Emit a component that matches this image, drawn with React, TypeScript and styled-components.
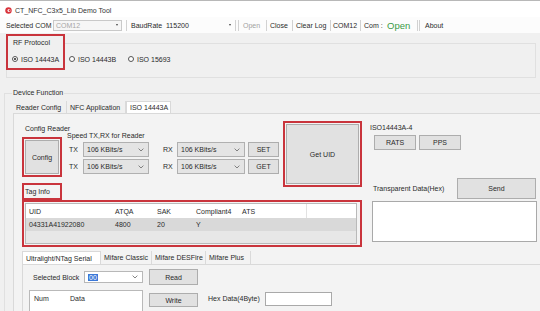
import React, { FunctionComponent } from 'react'
import styled, { createGlobalStyle, css } from 'styled-components'

const GlobalStyle = createGlobalStyle`
  html, body {
    margin: 0;
    padding: 0;
    background: #f0f0f0;
    overflow: hidden;
  }
  body {
    font-family: "Liberation Sans", Arial, sans-serif;
    font-size: 7px;
    color: #2a2a2a;
  }
`

const Window = styled.div`
  width: 540px;
  height: 311px;
  box-sizing: border-box;
  overflow: hidden;
  display: flex;
  flex-direction: column;
  border-top: 1px solid #b8b8b8;
`
const TitleBar = styled.div`
  height: 16px;
  flex: none;
  padding: 2px 0 0 5px;
  box-sizing: border-box;
  background: #fff;
  display: flex;
  align-items: center;
  gap: 3px;
  color: #333;
  white-space: nowrap;
`
const Toolbar = styled.div`
  height: 16px;
  flex: none;
  padding-left: 6px;
  background: #fcfcfc;
  display: flex;
  align-items: center;
  white-space: nowrap;
`
const ToolText = styled.span<{ $w: number; $muted?: boolean; $green?: boolean }>`
  width: ${(p) => p.$w}px;
  flex: none;
  color: ${(p) => (p.$muted ? '#a2a2a2' : '#2a2a2a')};
  ${(p) =>
    p.$green &&
    css`
      color: #3a9b46;
      font-size: 9.5px;
    `}
`
const ToolSep = styled.span<{ $ml: number; $mr: number }>`
  width: 1px;
  height: 11px;
  flex: none;
  background: #d2d2d2;
  margin: 0 ${(p) => p.$mr}px 0 ${(p) => p.$ml}px;
`
const ToolCombo = styled.div<{ $w: number; $boxed?: boolean }>`
  width: ${(p) => p.$w}px;
  height: 11px;
  flex: none;
  box-sizing: border-box;
  display: flex;
  align-items: center;
  justify-content: space-between;
  padding: 0 3px 0 2px;
  ${(p) =>
    p.$boxed &&
    css`
      border: 1px solid #c9c9c9;
      background: #f6f6f6;
      color: #a6a6a6;
    `}
`
const SmallArrow = styled.span`
  width: 0;
  height: 0;
  border-left: 1.5px solid transparent;
  border-right: 1.5px solid transparent;
  border-top: 2px solid #444;
`

const RfFrame = styled.div`
  flex: none;
  margin: 10px 4px 0 6px;
  height: 35px;
  box-sizing: border-box;
  border: 1px solid #e0e0e0;
`
const RfRow = styled.div`
  display: flex;
  align-items: flex-end;
  margin: -10px 0 0 -1px;
`
const RedBox = styled.div<{ $w: number; $h: number; $pad?: string }>`
  width: ${(p) => p.$w}px;
  height: ${(p) => p.$h}px;
  flex: none;
  box-sizing: border-box;
  border: 2px solid #c9343c;
  padding: ${(p) => p.$pad ?? '0'};
  display: flex;
  flex-direction: column;
`
const RfCaption = styled.div`
  height: 14px;
  line-height: 14px;
  padding-left: 5px;
  background: #f0f0f0;
`
const RadioItem = styled.label<{ $w?: number; $ml?: number; $mb?: number }>`
  height: 18px;
  ${(p) => p.$w !== undefined && `width: ${p.$w}px;`}
  margin-left: ${(p) => p.$ml ?? 0}px;
  margin-bottom: ${(p) => p.$mb ?? 0}px;
  flex: none;
  display: flex;
  align-items: center;
  gap: 3px;
  white-space: nowrap;
`
const RadioCircle = styled.span<{ $on?: boolean }>`
  width: 6px;
  height: 6px;
  box-sizing: border-box;
  border-radius: 50%;
  border: 1px solid #555;
  background: #fff;
  display: flex;
  align-items: center;
  justify-content: center;
  &::after {
    content: '';
    width: 2px;
    height: 2px;
    border-radius: 50%;
    background: ${(p) => (p.$on ? '#222' : 'transparent')};
  }
`

const DevFrame = styled.div`
  margin: 15px 0 0 4px;
  flex: 1;
  min-height: 0;
  display: flex;
  flex-direction: column;
  border-top: 1px solid #e0e0e0;
  border-left: 1px solid #e0e0e0;
`
const DevCaption = styled.div`
  align-self: flex-start;
  margin: -5px 0 0 7px;
  padding: 0 1px;
  height: 8px;
  line-height: 8px;
  background: #f0f0f0;
`
const TabStrip = styled.div<{ $h: number; $mt: number; $ml: number }>`
  flex: none;
  display: flex;
  align-items: flex-end;
  height: ${(p) => p.$h}px;
  margin: ${(p) => p.$mt}px 0 0 ${(p) => p.$ml}px;
  white-space: nowrap;
`
const Tab = styled.div<{ $w: number; $active?: boolean }>`
  width: ${(p) => p.$w}px;
  height: 100%;
  box-sizing: border-box;
  padding-left: 3px;
  display: flex;
  align-items: center;
  border-right: 1px solid #dadada;
  ${(p) =>
    p.$active &&
    css`
      background: #fff;
      border: 1px solid #d9d9d9;
      border-bottom: none;
    `}
`
const TabPage = styled.div`
  flex: none;
  margin-left: 8px;
  padding: 7px 0 0 8px;
  border-top: 1px solid #d9d9d9;
  border-left: 1px solid #d9d9d9;
  background: #f3f3f3;
`
const MainRow = styled.div`
  display: flex;
  align-items: flex-start;
`
const LeftCol = styled.div`
  width: 340px;
  display: flex;
  flex-direction: column;
`
const TopRow = styled.div`
  height: 62px;
  display: flex;
  align-items: flex-start;
`
const ConfigReader = styled.div`
  width: 258px;
  display: flex;
  flex-direction: column;
`
const Caption = styled.div<{ $h: number; $pl?: number }>`
  height: ${(p) => p.$h}px;
  line-height: ${(p) => p.$h}px;
  padding-left: ${(p) => p.$pl ?? 0}px;
  white-space: nowrap;
`
const ConfigBody = styled.div`
  display: flex;
  align-items: flex-start;
`
const SpeedGroup = styled.div`
  margin: -5px 0 0 5px;
  display: flex;
  flex-direction: column;
  gap: 2px;
`
const SpeedRow = styled.div`
  height: 15px;
  display: flex;
  align-items: center;
`
const FieldLabel = styled.span<{ $w: number; $ml?: number; $pl?: number }>`
  width: ${(p) => p.$w}px;
  margin-left: ${(p) => p.$ml ?? 0}px;
  padding-left: ${(p) => p.$pl ?? 0}px;
  box-sizing: border-box;
  flex: none;
  white-space: nowrap;
`
const Combo = styled.div<{ $w: number; $h?: number; $white?: boolean }>`
  width: ${(p) => p.$w}px;
  height: ${(p) => p.$h ?? 15}px;
  flex: none;
  box-sizing: border-box;
  border: 1px solid ${(p) => (p.$white ? '#b8b8b8' : '#b0b0b0')};
  background: ${(p) => (p.$white ? '#fff' : '#e4e4e4')};
  display: flex;
  align-items: center;
  justify-content: space-between;
  padding: 0 4px 0 3px;
  white-space: nowrap;
`
const Button = styled.div<{ $w?: number; $h?: number; $ml?: number; $mt?: number }>`
  ${(p) => (p.$w ? `width: ${p.$w}px;` : 'flex: 1;')}
  ${(p) => p.$h && `height: ${p.$h}px;`}
  margin-left: ${(p) => p.$ml ?? 0}px;
  margin-top: ${(p) => p.$mt ?? 0}px;
  flex-shrink: 0;
  box-sizing: border-box;
  border: 1px solid #adadad;
  background: #e1e1e1;
  display: flex;
  align-items: center;
  justify-content: center;
  white-space: nowrap;
`
const ListView = styled.div<{ $h?: number; $white?: boolean }>`
  flex: 1;
  ${(p) => p.$h && `height: ${p.$h}px;`}
  box-sizing: border-box;
  border: 1px solid #b9b9b9;
  background: ${(p) => (p.$white ? '#fff' : '#e7e7e7')};
  display: flex;
  flex-direction: column;
`
const ListRow = styled.div<{ $head?: boolean }>`
  height: ${(p) => (p.$head ? 14 : 13)}px;
  display: flex;
  align-items: center;
  background: ${(p) => (p.$head ? '#fff' : '#d9d9d9')};
  white-space: nowrap;
`
const Cell = styled.span<{ $w: number; $pl?: number; $line?: boolean }>`
  width: ${(p) => p.$w}px;
  flex: none;
  box-sizing: border-box;
  padding-left: ${(p) => p.$pl ?? 3}px;
  height: 100%;
  display: flex;
  align-items: center;
  ${(p) => p.$line && 'border-right: 1px solid #e2e2e2;'}
`
const RightCol = styled.div`
  width: 167px;
  margin-left: 8px;
  display: flex;
  flex-direction: column;
`
const BtnRow = styled.div`
  display: flex;
  gap: 3px;
  margin-left: 4px;
`
const SendRow = styled.div`
  margin-top: 28px;
  height: 21px;
  display: flex;
  align-items: center;
`
const TextBox = styled.div<{ $w: number; $h: number; $ml?: number; $mt?: number }>`
  width: ${(p) => p.$w}px;
  height: ${(p) => p.$h}px;
  margin-left: ${(p) => p.$ml ?? 0}px;
  margin-top: ${(p) => p.$mt ?? 0}px;
  box-sizing: border-box;
  border: 1px solid #a9a9a9;
  background: #fff;
`
const BottomTabs = styled.div`
  margin-top: 4px;
  display: flex;
  flex-direction: column;
`
const BottomPage = styled.div`
  height: 60px;
  padding: 4px 0 0 6px;
  border-top: 1px solid #d9d9d9;
  border-left: 1px solid #d9d9d9;
  display: grid;
  grid-template-columns: 114px 49px 55px 67px;
  grid-template-rows: 16px auto;
  column-gap: 6px;
  row-gap: 5px;
`
const BlockRow = styled.div`
  display: flex;
  align-items: center;
`
const Selected = styled.span`
  background: #3b78d8;
  color: #fff;
  padding: 0 1px;
`
const HexLabel = styled.div`
  margin-top: 2px;
  height: 14px;
  line-height: 14px;
  padding-left: 4px;
  white-space: nowrap;
`

const Chevron: FunctionComponent = () => (
  <svg width="6" height="4" viewBox="0 0 6 4">
    <polyline points="0.6,0.6 3,3 5.4,0.6" fill="none" stroke="#666" strokeWidth="0.8" />
  </svg>
)

const AppIcon: FunctionComponent = () => (
  <svg width="7" height="7" viewBox="0 0 10 10">
    <circle cx="5" cy="5" r="4.6" fill="#d8333b" />
    <circle cx="5.8" cy="5" r="2.2" fill="#fff" />
    <circle cx="6.6" cy="5" r="1.3" fill="#d8333b" />
  </svg>
)

const speedRows = [
  { tx: '106 KBits/s', rx: '106 KBits/s', action: 'SET' },
  { tx: '106 KBits/s', rx: '106 KBits/s', action: 'GET' },
]

const tagColumns = [
  { name: 'UID', w: 86, value: '04331A41922080' },
  { name: 'ATQA', w: 42, value: '4800' },
  { name: 'SAK', w: 39, value: '20' },
  { name: 'Compliant4', w: 46, value: 'Y' },
  { name: 'ATS', w: 68, value: '' },
]

const App: FunctionComponent = () => {
  return (
    <Window>
      <GlobalStyle />
      <TitleBar>
        <AppIcon />
        <span>CT_NFC_C3x5_Lib Demo Tool</span>
      </TitleBar>
      <Toolbar>
        <ToolText $w={47}>Selected COM</ToolText>
        <ToolCombo $w={69} $boxed>
          <span>COM12</span>
          <SmallArrow />
        </ToolCombo>
        <ToolSep $ml={4} $mr={4} />
        <ToolText $w={33}>BaudRate</ToolText>
        <ToolCombo $w={70}>
          <span>115200</span>
          <SmallArrow />
        </ToolCombo>
        <ToolSep $ml={1} $mr={2} />
        <ToolSep $ml={0} $mr={4} />
        <ToolText $w={19} $muted>
          Open
        </ToolText>
        <ToolSep $ml={4} $mr={3} />
        <ToolText $w={18}>Close</ToolText>
        <ToolSep $ml={4} $mr={3} />
        <ToolText $w={30}>Clear Log</ToolText>
        <ToolSep $ml={4} $mr={2} />
        <ToolText $w={24}>COM12</ToolText>
        <ToolSep $ml={3} $mr={3} />
        <ToolText $w={23}>Com :</ToolText>
        <ToolText $w={26} $green>
          Open
        </ToolText>
        <ToolSep $ml={4} $mr={1} />
        <ToolSep $ml={0} $mr={5} />
        <ToolText $w={30}>About</ToolText>
      </Toolbar>

      <RfFrame>
        <RfRow>
          <RedBox $w={59} $h={36}>
            <RfCaption>RF Protocol</RfCaption>
            <RadioItem $ml={4}>
              <RadioCircle $on />
              ISO 14443A
            </RadioItem>
          </RedBox>
          <RadioItem $w={59} $ml={4} $mb={2}>
            <RadioCircle />
            ISO 14443B
          </RadioItem>
          <RadioItem $mb={2}>
            <RadioCircle />
            ISO 15693
          </RadioItem>
        </RfRow>
      </RfFrame>

      <DevFrame>
        <DevCaption>Device Function</DevCaption>
        <TabStrip $h={12} $mt={4} $ml={8}>
          <Tab $w={54}>Reader Config</Tab>
          <Tab $w={59}>NFC Application</Tab>
          <Tab $w={45} $active>
            ISO 14443A
          </Tab>
        </TabStrip>
        <TabPage>
          <MainRow>
            <LeftCol>
              <TopRow>
                <ConfigReader>
                  <Caption $h={16} $pl={3}>
                    Config Reader
                  </Caption>
                  <ConfigBody>
                    <RedBox $w={40} $h={40} $pad="1px">
                      <Button>Config</Button>
                    </RedBox>
                    <SpeedGroup>
                      <Caption $h={8}>Speed TX,RX for Reader</Caption>
                      {speedRows.map((row, index) => (
                        <SpeedRow key={index}>
                          <FieldLabel $w={16} $pl={2}>
                            TX
                          </FieldLabel>
                          <Combo $w={66}>
                            <span>{row.tx}</span>
                            <Chevron />
                          </Combo>
                          <FieldLabel $w={14} $ml={14}>
                            RX
                          </FieldLabel>
                          <Combo $w={68}>
                            <span>{row.rx}</span>
                            <Chevron />
                          </Combo>
                          <Button $w={31} $h={15} $ml={3}>
                            {row.action}
                          </Button>
                        </SpeedRow>
                      ))}
                    </SpeedGroup>
                  </ConfigBody>
                </ConfigReader>
                <RedBox $w={79} $h={66} $pad="1px" style={{ marginLeft: 3 }}>
                  <Button>Get UID</Button>
                </RedBox>
              </TopRow>
              <RedBox $w={40} $h={17} $pad="0 0 0 1px">
                <Caption $h={13}>Tag Info</Caption>
              </RedBox>
              <RedBox $w={340} $h={47} $pad="1px 3px 1px 1px">
                <ListView>
                  <ListRow $head>
                    {tagColumns.map((col) => (
                      <Cell key={col.name} $w={col.w} $line={col.name === 'ATS'}>
                        {col.name}
                      </Cell>
                    ))}
                  </ListRow>
                  <ListRow>
                    {tagColumns.map((col) => (
                      <Cell key={col.name} $w={col.w}>
                        {col.value}
                      </Cell>
                    ))}
                  </ListRow>
                </ListView>
              </RedBox>
            </LeftCol>
            <RightCol>
              <Caption $h={14}>ISO14443A-4</Caption>
              <BtnRow>
                <Button $w={42} $h={15}>
                  RATS
                </Button>
                <Button $w={42} $h={15}>
                  PPS
                </Button>
              </BtnRow>
              <SendRow>
                <FieldLabel $w={87} $pl={3}>
                  Transparent Data(Hex)
                </FieldLabel>
                <Button $w={79} $h={21}>
                  Send
                </Button>
              </SendRow>
              <TextBox $w={165} $h={41} $ml={2} $mt={2} />
            </RightCol>
          </MainRow>

          <BottomTabs>
            <TabStrip $h={13} $mt={0} $ml={0}>
              <Tab $w={79} $active>
                Ultralight/NTag Serial
              </Tab>
              <Tab $w={51}>Mifare Classic</Tab>
              <Tab $w={54}>Mifare DESFire</Tab>
              <Tab $w={45}>Mifare Plus</Tab>
            </TabStrip>
            <BottomPage>
              <BlockRow>
                <FieldLabel $w={55} $pl={4}>
                  Selected Block
                </FieldLabel>
                <Combo $w={59} $h={12} $white>
                  <Selected>00</Selected>
                  <Chevron />
                </Combo>
              </BlockRow>
              <Button $w={49} $h={16}>
                Read
              </Button>
              <div />
              <div />
              <ListView $h={40} $white>
                <ListRow $head>
                  <Cell $w={37} $pl={4}>
                    Num
                  </Cell>
                  <Cell $w={60}>Data</Cell>
                </ListRow>
              </ListView>
              <Button $w={49} $h={14} $mt={3}>
                Write
              </Button>
              <HexLabel>Hex Data(4Byte)</HexLabel>
              <TextBox $w={67} $h={14} $mt={2} />
            </BottomPage>
          </BottomTabs>
        </TabPage>
      </DevFrame>
    </Window>
  )
}

export default App
